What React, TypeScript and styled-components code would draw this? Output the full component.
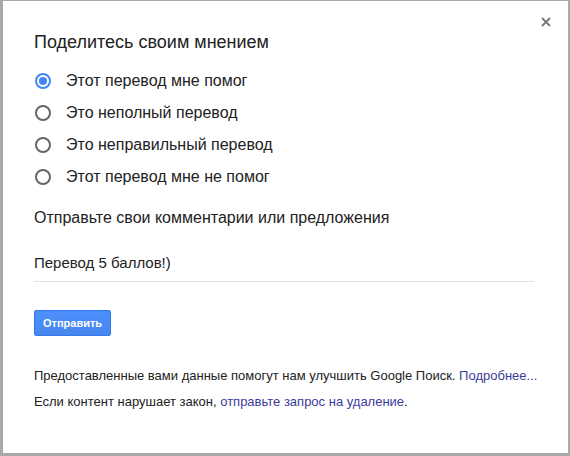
import React from 'react';
import styled, { createGlobalStyle } from 'styled-components';

const GlobalStyle = createGlobalStyle`
	html, body {
		margin: 0;
		padding: 0;
		background: #a9a9a9;
	}
	body {
		font-family: 'Liberation Sans', Arial, sans-serif;
	}
`;

const Dialog = styled.div`
	position: relative;
	box-sizing: border-box;
	margin: 1px 2px 0 3px;
	width: 565px;
	height: 452px;
	background: #fff;
	padding: 29px 20px 0 31px;
	color: #222;
`;

const Close = styled.button`
	position: absolute;
	top: 12px;
	right: 13px;
	width: 18px;
	height: 18px;
	padding: 0;
	border: 0;
	background: none;
	cursor: pointer;
	display: flex;
	align-items: center;
	justify-content: center;
`;

const Title = styled.h2`
	margin: 0 0 16px;
	font-size: 18px;
	font-weight: normal;
	line-height: 24px;
	color: #222;
`;

const Options = styled.div`
	display: flex;
	flex-direction: column;
	gap: 10px;
	margin-bottom: 19px;
`;

const Option = styled.label`
	display: flex;
	align-items: center;
	gap: 15px;
	height: 22px;
	font-size: 16px;
	color: #222;
	cursor: pointer;
`;

const Radio = styled.span<{ $checked?: boolean }>`
	box-sizing: border-box;
	width: 16px;
	height: 16px;
	margin-left: 1px;
	border-radius: 50%;
	border: 2px solid ${p => (p.$checked ? '#4285f4' : '#666')};
	display: flex;
	align-items: center;
	justify-content: center;
	&::after {
		content: '';
		width: 8px;
		height: 8px;
		border-radius: 50%;
		background: #4285f4;
		display: ${p => (p.$checked ? 'block' : 'none')};
	}
`;

const Label = styled.div`
	font-size: 16px;
	line-height: 22px;
	color: #222;
	margin-bottom: 24px;
`;

const Input = styled.div`
	border-bottom: 1px solid #e0e0e0;
	font-size: 15px;
	line-height: 20px;
	padding: 0 0 8px 0;
	margin: 0 14px 30px 0;
	color: #222;
`;

const Button = styled.button`
	height: 26px;
	padding: 0 8px;
	border: 1px solid #3079ed;
	border-radius: 2px;
	background: linear-gradient(#4d90fe, #4787ed);
	color: #fff;
	font-family: 'Liberation Sans', Arial, sans-serif;
	font-size: 11px;
	font-weight: bold;
	cursor: pointer;
	margin-top: -2px;
	margin-bottom: 31px;
`;

const Note = styled.p`
	margin: 0 0 8px;
	font-size: 13px;
	line-height: 18px;
	color: #222;
	white-space: nowrap;
	a {
		color: #3c3c9c;
		text-decoration: none;
	}
`;

const options = [
	'Этот перевод мне помог',
	'Это неполный перевод',
	'Это неправильный перевод',
	'Этот перевод мне не помог',
];

export default function App() {
	const [selected, setSelected] = React.useState(0);
	return (
		<>
			<GlobalStyle />
			<Dialog>
				<Close aria-label="Закрыть">
					<svg width="10" height="10" viewBox="0 0 10 10">
						<path d="M1 1L9 9M9 1L1 9" stroke="#777" strokeWidth="1.8" />
					</svg>
				</Close>
				<Title>Поделитесь своим мнением</Title>
				<Options>
					{options.map((text, i) => (
						<Option key={text} onClick={() => setSelected(i)}>
							<Radio $checked={selected === i} />
							{text}
						</Option>
					))}
				</Options>
				<Label>Отправьте свои комментарии или предложения</Label>
				<Input>Перевод 5 баллов!)</Input>
				<Button>Отправить</Button>
				<Note>
					Предоставленные вами данные помогут нам улучшить Google Поиск.{' '}
					<a href="#">Подробнее...</a>
				</Note>
				<Note>
					Если контент нарушает закон, <a href="#">отправьте запрос на удаление</a>.
				</Note>
			</Dialog>
		</>
	);
}
